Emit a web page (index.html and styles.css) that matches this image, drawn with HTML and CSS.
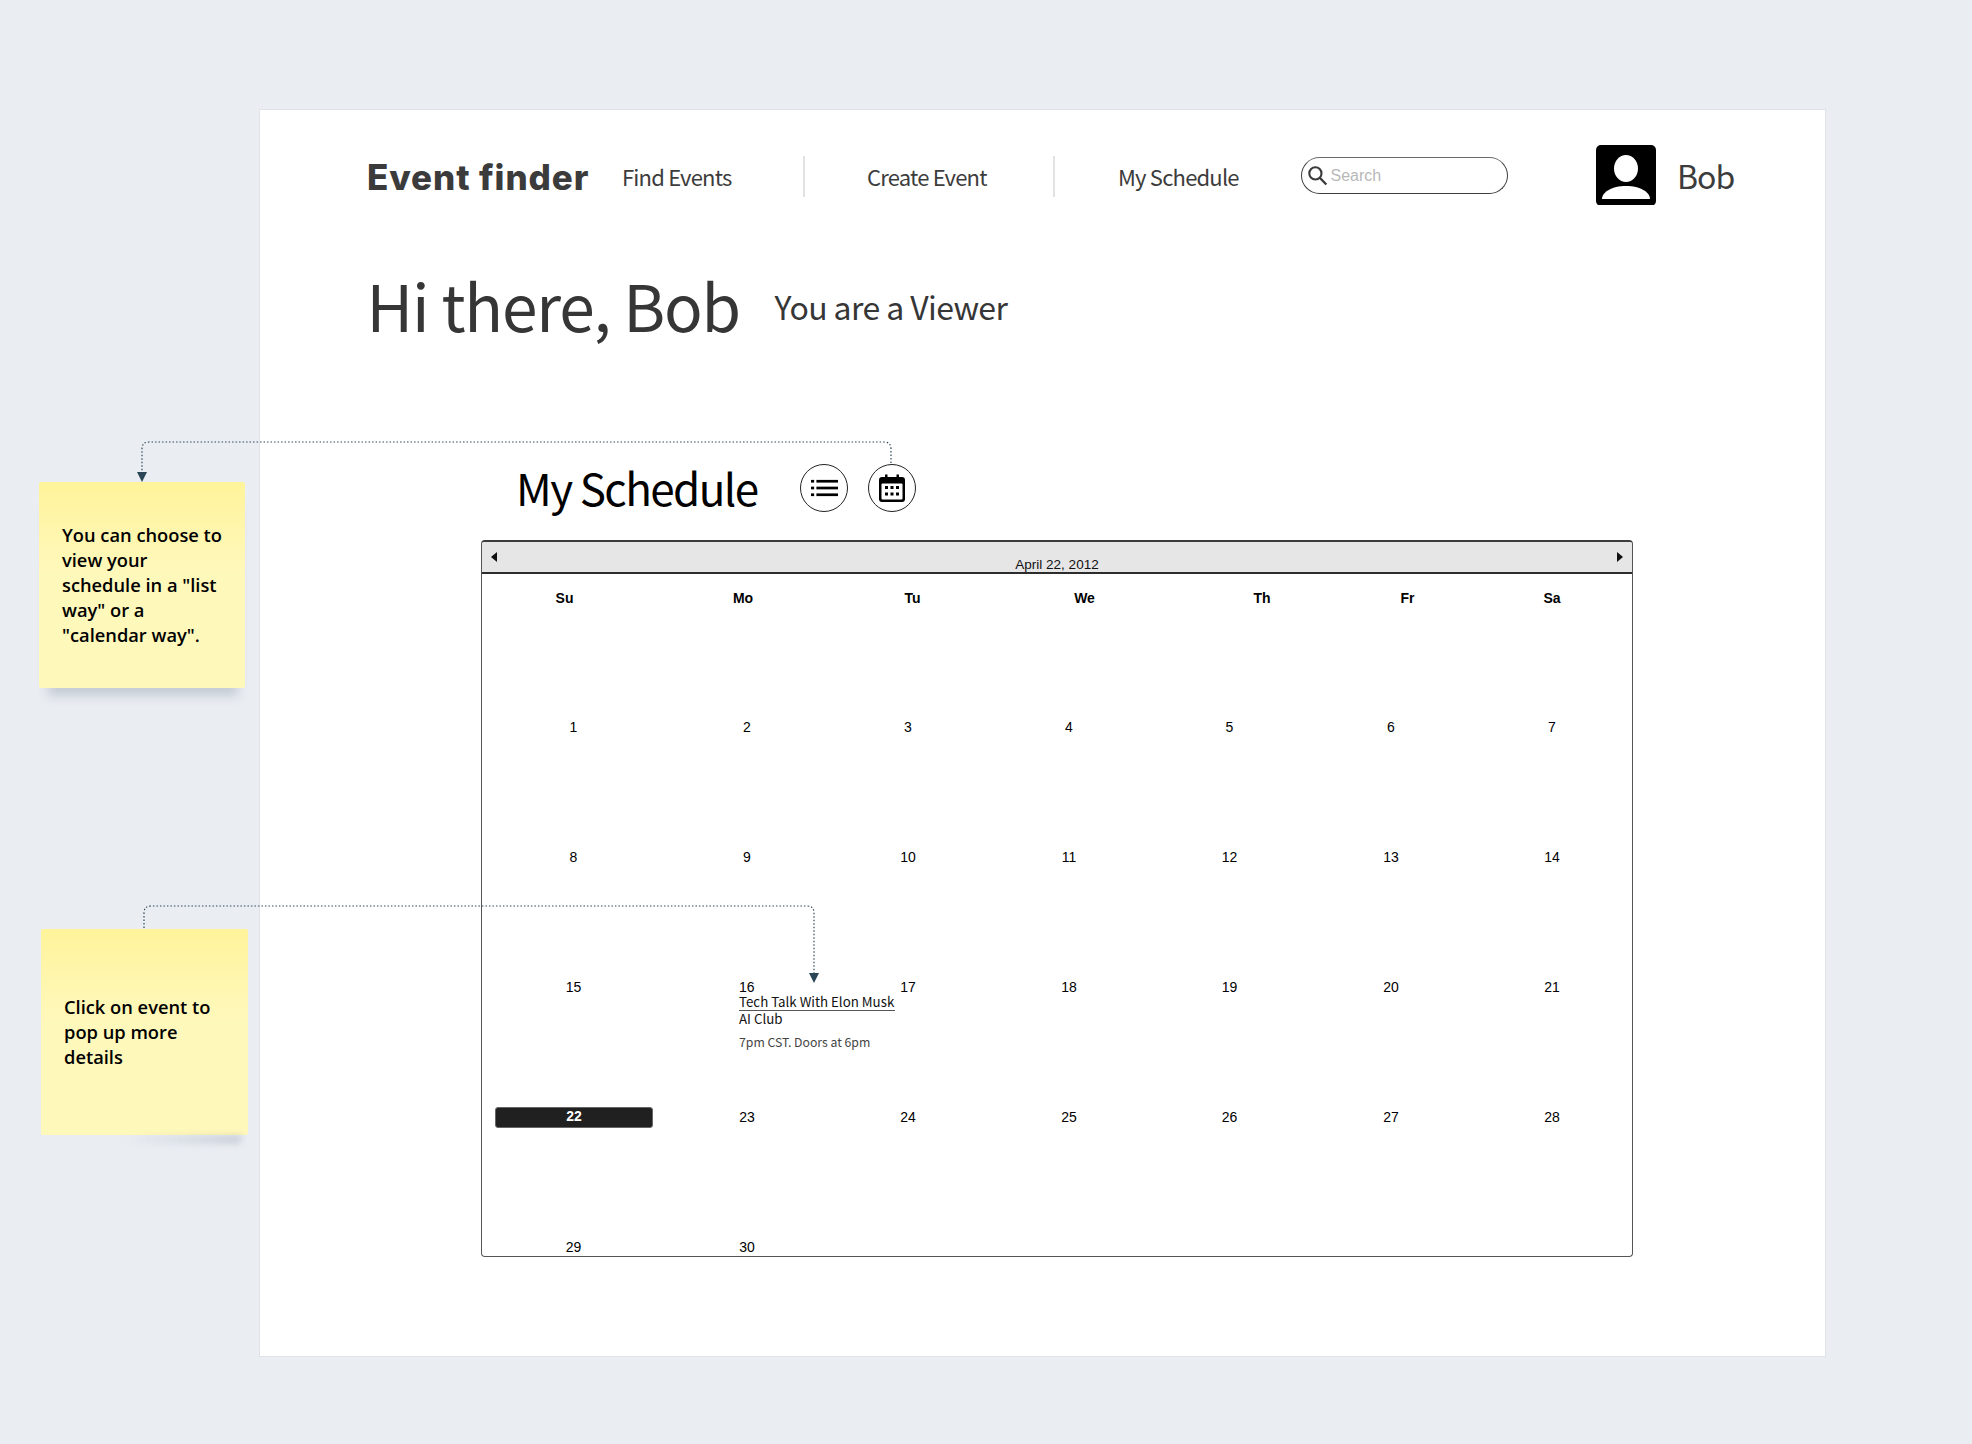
FILE: index.html
```html
<!DOCTYPE html>
<html lang="en">
<head>
<meta charset="utf-8">
<title>Event finder</title>
<link rel="stylesheet" href="styles.css">
</head>
<body>
<div class="canvas">
  <main class="card">
    <header class="topbar">
      <div class="brand">Event finder</div>
      <a class="nav-link nav-find">Find Events</a>
      <span class="nav-sep sep-one"></span>
      <a class="nav-link nav-create">Create Event</a>
      <span class="nav-sep sep-two"></span>
      <a class="nav-link nav-mine">My Schedule</a>
      <div class="search">
        <svg class="search-icon" viewBox="0 0 20 20" width="21" height="21"><circle cx="8" cy="8" r="5.8" fill="none" stroke="#3a3a3a" stroke-width="2"/><path d="M12.4 12.4 18.4 18.6" stroke="#3a3a3a" stroke-width="2.2" fill="none"/></svg>
        <span class="search-text">Search</span>
      </div>
      <div class="avatar">
        <svg viewBox="0 0 60 60" width="60" height="60"><rect width="60" height="61" rx="5" fill="#000"/><ellipse cx="30" cy="23.500" rx="12" ry="13.500" fill="#fff"/><path d="M6 54C6 47 16 41 30 41S54 47 54 54Z" fill="#fff"/></svg>
      </div>
      <div class="user-name">Bob</div>
    </header>

    <section class="greeting">
      <h1 class="greeting-title">Hi there, Bob</h1>
      <p class="greeting-role">You are a Viewer</p>
    </section>

    <section class="schedule-head">
      <h2 class="schedule-title">My Schedule</h2>
      <button class="view-btn view-list">
        <svg viewBox="0 0 30 20" width="27" height="18"><g fill="#000"><rect x="0" y="1" width="3.500" height="3"/><rect x="6" y="1" width="24" height="3"/><rect x="0" y="8.500" width="3.500" height="3"/><rect x="6" y="8.500" width="24" height="3"/><rect x="0" y="16" width="3.500" height="3"/><rect x="6" y="16" width="24" height="3"/></g></svg>
      </button>
      <button class="view-btn view-cal">
        <svg viewBox="0 0 26 28" width="26" height="28"><path d="M3 3H6V0.500H8.500V3H17.500V0.500H20V3H23A3 3 0 0 1 26 6V25A3 3 0 0 1 23 28H3A3 3 0 0 1 0 25V6A3 3 0 0 1 3 3Z" fill="#000"/><rect x="2.500" y="9.500" width="21" height="16" rx="1" fill="#fff"/><g fill="#000"><rect x="6" y="12" width="3" height="3"/><rect x="11.500" y="12" width="3" height="3"/><rect x="17" y="12" width="3" height="3"/><rect x="6" y="18.500" width="3" height="3"/><rect x="11.500" y="18.500" width="3" height="3"/><rect x="17" y="18.500" width="3" height="3"/></g></svg>
      </button>
    </section>

    <section class="calendar">
      <div class="cal-bar">
        <span class="cal-arrow cal-prev"></span>
        <span class="cal-month">April 22, 2012</span>
        <span class="cal-arrow cal-next"></span>
      </div>
      <div class="cal-weekdays">
        <span>Su</span><span>Mo</span><span>Tu</span><span>We</span><span>Th</span><span>Fr</span><span>Sa</span>
      </div>
      <div class="cal-grid">
        <div class="day">1</div><div class="day">2</div><div class="day">3</div><div class="day">4</div><div class="day">5</div><div class="day">6</div><div class="day">7</div>
        <div class="day">8</div><div class="day">9</div><div class="day">10</div><div class="day">11</div><div class="day">12</div><div class="day">13</div><div class="day">14</div>
        <div class="day">15</div>
        <div class="day day-event">16
          <div class="event">
            <div class="event-title">Tech Talk With Elon Musk</div>
            <div class="event-club">AI Club</div>
            <div class="event-time">7pm CST. Doors at 6pm</div>
          </div>
        </div>
        <div class="day">17</div><div class="day">18</div><div class="day">19</div><div class="day">20</div><div class="day">21</div>
        <div class="day"><span class="today">22</span></div><div class="day">23</div><div class="day">24</div><div class="day">25</div><div class="day">26</div><div class="day">27</div><div class="day">28</div>
        <div class="day">29</div><div class="day">30</div>
      </div>
    </section>
  </main>

  <aside class="sticky sticky-one">You can choose to view your schedule in a "list way" or a "calendar way".</aside>
  <aside class="sticky sticky-two">Click on event to pop up more details</aside>

  <svg class="connectors" viewBox="0 0 1972 1444" width="1972" height="1444">
    <g fill="none" stroke="#2f4858" stroke-width="1.200" stroke-dasharray="1.500 2">
      <path d="M891 463V449Q891 442 884 442H149Q142 442 142 449V473"/>
      <path d="M144 928V913Q144 906 151 906H807Q814 906 814 913V974"/>
    </g>
    <path d="M137 472H147L142 482Z" fill="#2a4555"/>
    <path d="M809 973H819L814 983Z" fill="#2a4555"/>
  </svg>
</div>
</body>
</html>
```

FILE: styles.css
```css
* { box-sizing: border-box; }

html, body { margin: 0; padding: 0; }

body {
  background: #eaeef3;
  font-family: "Liberation Sans", Arial, sans-serif;
}

.canvas {
  position: relative;
  width: 1972px;
  height: 1444px;
  padding: 109px 0 0 259px;
  overflow: hidden;
}

.card {
  width: 1567px;
  height: 1248px;
  background: #fff;
  border: 1px solid #dfe3e8;
}

/* top bar */
.topbar {
  display: flex;
  align-items: center;
  height: 61px;
  margin-top: 35px;
  padding-left: 107px;
}

.brand {
  width: 220px;
  font-family: Inter, "Liberation Sans", sans-serif;
  font-weight: 800;
  font-size: 35px;
  letter-spacing: .9px;
  line-height: 40px;
  color: #3b3b3b;
  white-space: nowrap;
  margin-top: 3px;
}

.nav-link {
  font-family: "Noto Sans CJK SC", "Noto Sans", sans-serif;
  font-size: 22px;
  letter-spacing: -.8px;
  line-height: 30px;
  color: #3c3c3c;
  white-space: nowrap;
}

.nav-find { margin-left: 35px; width: 111px; }
.nav-create { margin-left: 62px; width: 121px; }
.nav-mine { margin-left: 63px; width: 121px; }

.nav-sep {
  width: 2px;
  height: 41px;
  background: #e2e2e2;
  margin-top: 2px;
}

.sep-one { margin-left: 70px; }
.sep-two { margin-left: 65px; }

.search {
  display: flex;
  align-items: center;
  width: 207px;
  height: 37px;
  margin-left: 62px;
  padding-left: 5px;
  border: 1.500px solid #3d3d3d;
  border-top-color: #6b6b6b;
  border-radius: 19px;
}

.search-icon { flex: none; }

.search-text {
  margin-left: 2.500px;
  font-size: 16px;
  line-height: 20px;
  color: #b8b8b8;
}

.avatar {
  width: 60px;
  height: 61px;
  margin-left: 88px;
}

.avatar svg { display: block; }

.user-name {
  margin-left: 21px;
  margin-top: -2px;
  font-family: "Noto Sans CJK SC", "Noto Sans", sans-serif;
  font-size: 32px;
  letter-spacing: -1px;
  line-height: 40px;
  color: #3c3c3c;
}

/* greeting */
.greeting {
  display: flex;
  align-items: baseline;
  margin-top: 56px;
  padding-left: 106.500px;
}

.greeting-title {
  margin: 0;
  font-family: "Noto Sans CJK SC", "Noto Sans", sans-serif;
  font-weight: 400;
  font-size: 64px;
  letter-spacing: -1.2px;
  line-height: 84px;
  color: #363636;
  white-space: nowrap;
}

.greeting-role {
  margin: 0 0 0 34.500px;
  font-family: "Noto Sans CJK SC", "Noto Sans", sans-serif;
  font-size: 32px;
  letter-spacing: -.6px;
  line-height: 40px;
  color: #363636;
  white-space: nowrap;
  position: relative;
  top: -12px;
}

/* schedule heading */
.schedule-head {
  display: flex;
  align-items: center;
  height: 48px;
  margin-top: 118px;
  padding-left: 256px;
}

.schedule-title {
  margin: -3px 0 0;
  width: 241px;
  font-family: "Noto Sans CJK SC", "Noto Sans", sans-serif;
  font-weight: 400;
  font-size: 44px;
  letter-spacing: -1.6px;
  line-height: 56px;
  color: #000;
  white-space: nowrap;
}

.view-btn {
  display: flex;
  align-items: center;
  justify-content: center;
  width: 48px;
  height: 48px;
  padding: 0;
  background: #fff;
  border: 1.500px solid #222;
  border-radius: 50%;
}

.view-list { margin-left: 43px; }
.view-cal { margin-left: 20px; }

.view-btn svg { display: block; }

/* calendar */
.calendar {
  width: 1152px;
  height: 717px;
  margin: 28px 0 0 221px;
  border: 1.500px solid #555;
  border-top: 2px solid #3c3c3c;
  border-radius: 4px;
  overflow: hidden;
}

.cal-bar {
  display: flex;
  align-items: center;
  justify-content: space-between;
  height: 32px;
  padding: 0 9px;
  background: #e6e6e6;
  border-bottom: 2px solid #2c2c2c;
}

.cal-month {
  font-size: 13.500px;
  line-height: 16px;
  color: #111;
  padding-top: 16px;
}

.cal-arrow {
  width: 0;
  height: 0;
  border-top: 5.500px solid transparent;
  border-bottom: 5.500px solid transparent;
  margin-top: -1px;
}

.cal-prev { border-right: 6px solid #111; }
.cal-next { border-left: 6px solid #111; }

.cal-weekdays {
  display: grid;
  grid-template-columns: 165px 192px 147px 197px 158px 133px 156px;
  height: 24px;
  margin-top: 14px;
  text-align: center;
  font-size: 14px;
  font-weight: 700;
  line-height: 20px;
  color: #000;
}

.cal-grid {
  display: grid;
  grid-template-columns: 183px 164px 158px 164px 157px 166px 156px;
  grid-auto-rows: 130px;
  padding-top: 106px;
}

.day {
  text-align: center;
  font-size: 14px;
  line-height: 18px;
  color: #000;
  position: relative;
}

.day-event {
  text-align: left;
  padding: 2px 0 0 74px;
  line-height: 14px;
}

.today {
  display: block;
  width: 158px;
  height: 21px;
  margin: -1.500px 0 0 13px;
  background: #202020;
  border: 1px solid #666;
  border-radius: 3px;
  color: #fff;
  font-weight: 700;
  text-align: center;
  line-height: 17px;
}

.event {
  position: absolute;
  top: 16.500px;
  left: 74px;
  width: 156px;
  font-family: "Noto Sans CJK SC", "Noto Sans", sans-serif;
  white-space: nowrap;
}

.event-title {
  font-size: 13.300px;
  line-height: 13px;
  padding-bottom: 2px;
  color: #111;
  border-bottom: 1.500px solid #555;
}

.event-club {
  font-size: 13.300px;
  line-height: 16px;
  color: #111;
}

.event-time {
  margin-top: 7px;
  font-size: 12.250px;
  line-height: 16px;
  color: #444;
}

/* sticky notes (free canvas) */
.sticky {
  position: absolute;
  height: 206px;
  display: flex;
  align-items: center;
  background: linear-gradient(#fff39a 0, #fff6ae 25%, #fff8bb 45%);
  border-radius: 2px;
  font-family: "Open Sans", "Noto Sans", sans-serif;
  font-weight: 600;
  font-size: 18.300px;
  line-height: 25px;
  color: #000;
}

.sticky-one {
  left: 39px;
  top: 482px;
  width: 206px;
  padding: 0 20px 2px 23px;
  box-shadow: 1px 16px 10px -8px rgba(90, 105, 125, .25);
}

.sticky-two {
  left: 41px;
  top: 929px;
  width: 207px;
  padding: 0 20px 2px 23px;
}

.sticky-two::after {
  content: "";
  position: absolute;
  left: 80px;
  right: 6px;
  bottom: -9px;
  height: 9px;
  border-radius: 0 0 6px 6px;
  background: linear-gradient(to right, rgba(90, 105, 125, 0), rgba(90, 105, 125, .22));
  filter: blur(3px);
}

.connectors {
  position: absolute;
  left: 0;
  top: 0;
  pointer-events: none;
}
```
